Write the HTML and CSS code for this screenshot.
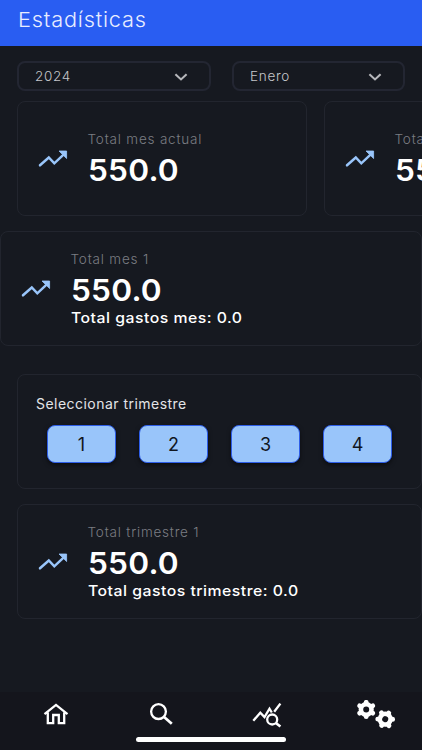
FILE: index.html
```html
<!DOCTYPE html>
<html lang="es">
<head>
<meta charset="utf-8">
<meta name="viewport" content="width=device-width, initial-scale=1">
<title>Estadísticas</title>
<link rel="stylesheet" href="styles.css">
</head>
<body>
<svg class="defs" width="0" height="0">
  <symbol id="trend" viewBox="0 0 30 18">
    <path d="M2 15.3 10.8 7.5 16.3 13.3 25 5.2" fill="none" stroke="currentColor" stroke-width="2.5" stroke-linecap="round"/>
    <path d="M21 1h7.6v7.5z" fill="currentColor" stroke="currentColor" stroke-width=".8" stroke-linejoin="round"/>
  </symbol>
  <symbol id="chevron" viewBox="0 0 14 8">
    <path d="m1.4 1.2 5.6 5.2 5.6-5.2" fill="none" stroke="currentColor" stroke-width="2.1"/>
  </symbol>
</svg>
<div class="app">
  <header class="header"><h1>Estadísticas</h1></header>
  <main>
    <div class="filters">
      <div class="select year"><span>2024</span><svg><use href="#chevron"/></svg></div>
      <div class="select month"><span>Enero</span><svg><use href="#chevron"/></svg></div>
    </div>
    <div class="carousel">
      <section class="card">
        <svg class="trend"><use href="#trend"/></svg>
        <div class="single"><p class="label">Total mes actual</p><p class="value">550.0</p></div>
      </section>
      <section class="card">
        <svg class="trend"><use href="#trend"/></svg>
        <div class="single"><p class="label">Total mes actual</p><p class="value">550.0</p></div>
      </section>
    </div>
    <section class="card full">
      <svg class="trend"><use href="#trend"/></svg>
      <div class="detail"><p class="label">Total mes 1</p><p class="value">550.0</p><p class="expense">Total gastos mes: 0.0</p></div>
    </section>
    <section class="quarters">
      <h2>Seleccionar trimestre</h2>
      <div class="buttons"><button>1</button><button>2</button><button>3</button><button>4</button></div>
    </section>
    <section class="card quarter">
      <svg class="trend"><use href="#trend"/></svg>
      <div class="detail"><p class="label">Total trimestre 1</p><p class="value">550.0</p><p class="expense">Total gastos trimestre: 0.0</p></div>
    </section>
  </main>
  <nav class="nav">
    <div class="tabs">
      <svg width="28" height="24" viewBox="0 0 28 24"><path d="M2.5 11.2 14 1.9l11.5 9.3M5.8 9.5v10.7h5.4v-8.2h5.6v8.2h5.4V9.5" fill="none" stroke="#fff" stroke-width="2.3"/></svg>
      <svg width="26" height="24" viewBox="0 0 26 24"><circle cx="10.5" cy="8.6" r="7.4" fill="none" stroke="#fff" stroke-width="2.3"/><path d="m15.8 13.8 8 7" stroke="#fff" stroke-width="2.8"/></svg>
      <svg width="30" height="26" viewBox="0 0 30 26"><g fill="none" stroke="#fff" stroke-width="2.3"><path d="m1.3 17.7 7-8 4.2 4.4 5-8.4 2.3 3.8M22.2 8.8l6.2-8.2"/><circle cx="20.2" cy="16.5" r="5"/><path d="m23.8 19.9 4.6 3.6" stroke-width="2.6"/></g></svg>
      <svg width="40" height="30" viewBox="0 0 40 30"><defs><g id="gear"><circle r="5.3" fill="none" stroke="#fff" stroke-width="4.6"/><g stroke="#fff" stroke-width="4.8" stroke-linecap="round"><path d="M0-6.8v-.4M0 6.8v.4M5.9-3.4l.6-.3M-5.9 3.4l-.6.3M5.9 3.4l.6.3M-5.9-3.4l-.6-.3"/></g></g></defs><use href="#gear" x="10.2" y="9.5"/><use href="#gear" transform="translate(29.2 19.2) rotate(30)"/></svg>
    </div>
    <div class="indicator"></div>
  </nav>
</div>
</body>
</html>
```
FILE: styles.css
```css
* { box-sizing: border-box; }
body {
  margin: 0;
  background: #161920;
  color: #fff;
  font-family: Inter, "Noto Sans", sans-serif;
}
.defs { display: block; }
h1, h2, p { margin: 0; font-weight: 400; white-space: nowrap; }
.app {
  display: flex;
  flex-direction: column;
  height: 750px;
  overflow: hidden;
}
.header {
  height: 46px;
  padding: 6px 18px 0;
  background: #295df2;
}
h1 {
  color: #e8edff;
  font-size: 20.5px;
  font-weight: 300;
  line-height: 28px;
  letter-spacing: .75px;
  transform: scaleX(1.06);
  transform-origin: left;
}
main { flex: 1; padding-top: 15px; }
.filters { display: flex; gap: 21px; padding-left: 17px; }
.select {
  display: flex;
  align-items: center;
  justify-content: space-between;
  height: 30px;
  padding: 0 21px 0 16px;
  border: 2px solid #232632;
  border-radius: 8px;
  color: #c5c6ca;
  font-size: 13.5px;
  font-weight: 300;
  letter-spacing: .7px;
}
.select svg { width: 14px; height: 8px; margin-top: 2px; color: #b6b7bb; }
.year { width: 194px; }
.month { width: 173px; }
.carousel {
  display: flex;
  gap: 17px;
  padding: 10px 0 0 17px;
  overflow: hidden;
}
.card {
  display: flex;
  flex: none;
  align-items: center;
  width: 290px;
  height: 115px;
  padding-left: 20px;
  border: 1px solid #22252e;
  border-radius: 8px;
}
.full { width: 422px; margin-top: 15px; }
.trend { width: 30px; height: 18px; margin-right: 19.5px; color: #99c5fa; }
.label {
  color: #7b7d83;
  font-size: 13.5px;
  font-weight: 300;
  line-height: 20px;
  letter-spacing: .8px;
}
.single { padding-top: 2px; }
.detail { padding-bottom: 2px; }
.value {
  font-size: 30px;
  font-weight: 600;
  line-height: 42px;
  letter-spacing: .2px;
  transform: scaleX(1.055);
  transform-origin: left;
}
.expense {
  margin-top: -1px;
  font-size: 14.5px;
  font-weight: 500;
  line-height: 16px;
  letter-spacing: .45px;
  transform: scaleX(1.09);
  transform-origin: left;
}
.quarters {
  height: 115px;
  width: 405px;
  margin: 28px 0 0 17px;
  padding: 19px 18px 0;
  border: 1px solid #22252e;
  border-radius: 8px;
}
h2 {
  color: #e3e4e7;
  font-size: 14px;
  line-height: 20px;
  letter-spacing: .47px;
}
.buttons { display: flex; gap: 23px; padding: 11px 0 0 11px; }
button {
  width: 69px;
  height: 38px;
  padding: 0;
  border: 1px solid #2d5de8;
  border-radius: 8px;
  background: #99c5fa;
  box-shadow: 0 2px 4px #0008;
  color: #11161e;
  font: 400 18px Inter, sans-serif;
}
.quarter { width: 405px; margin: 15px 0 0 17px; }
.nav { height: 58px; background: #14151c; }
.tabs {
  display: flex;
  align-items: flex-start;
  height: 45px;
  padding: 11px 0 0 42px;
}
.tabs svg:nth-child(2) { margin-left: 78px; }
.tabs svg:nth-child(3) { margin-left: 78px; }
.tabs svg:nth-child(4) { margin: -3px 0 0 74px; }
.indicator {
  width: 150px;
  height: 5px;
  margin-left: 136px;
  border-radius: 3px;
  background: #fff;
}
```
